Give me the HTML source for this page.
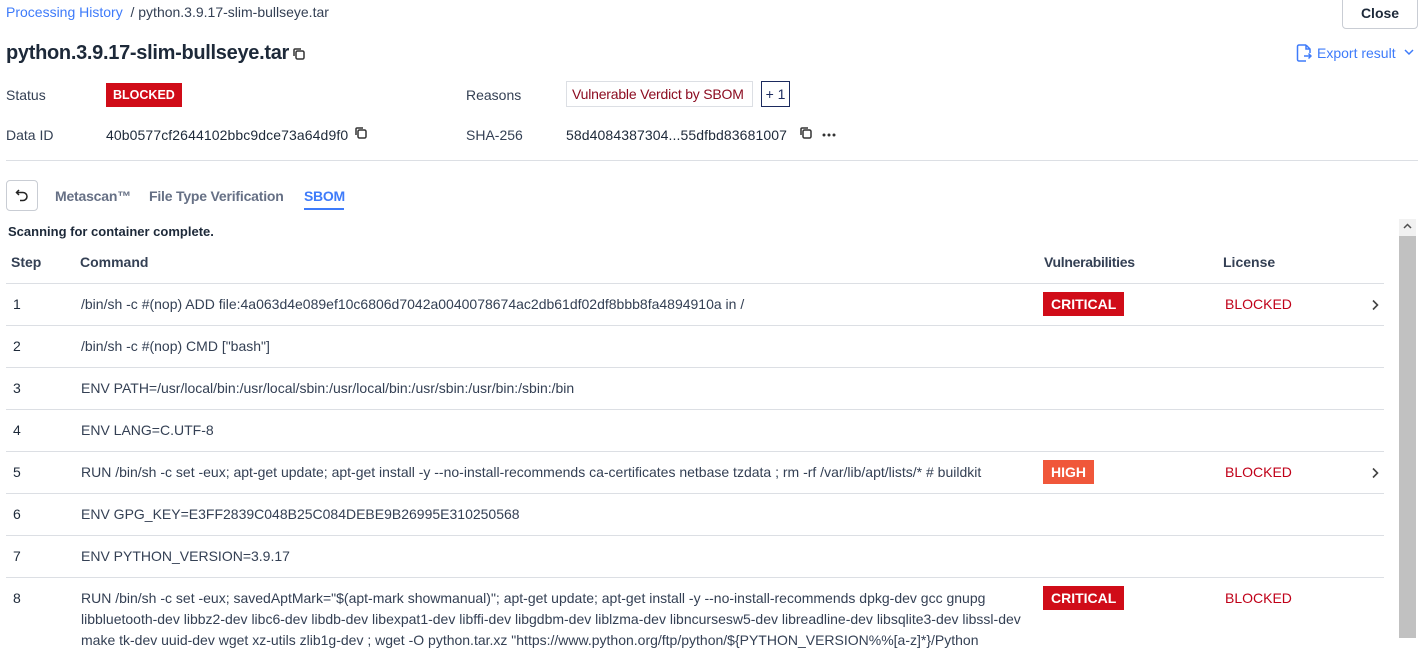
<!DOCTYPE html>
<html><head><meta charset="utf-8"><style>
*{box-sizing:border-box;margin:0;padding:0}
body{width:1428px;height:638px;overflow:hidden;background:#fff;font-family:"Liberation Sans",sans-serif;color:#1d2939;position:relative;font-size:14px}
.a{position:absolute;white-space:nowrap}
.lbl{color:#344054;font-size:14px}
.tag{background:#d00c18;color:#fff;font-weight:bold;font-size:13px;padding:0 7px;height:24px;line-height:24px}
.hi{background:#f0573a}
.row{position:absolute;left:6px;width:1378px;height:42px;border-top:1px solid #dcdfe4}
.row .n{position:absolute;left:7px;top:12px}
.row .c{position:absolute;left:75px;top:10px;font-size:14px;letter-spacing:0;color:#344054;white-space:nowrap;line-height:21px}
.row .v{position:absolute;left:1037px;top:8px;padding:0 8px;font-size:14px}
.row .l{position:absolute;left:1219px;top:12px;color:#c00018}
.row .ch{position:absolute;left:1365px;top:15px}
</style></head><body>
<div class="a" style="left:6px;top:4px;color:#3e7bfa;font-size:14px">Processing History <span style="color:#344054">&nbsp;/ python.3.9.17-slim-bullseye.tar</span></div>
<div class="a" style="left:1342px;top:-4px;width:76px;height:33px;border:1px solid #c9cdd4;border-radius:4px;text-align:center;line-height:32px;font-weight:bold;font-size:14px">Close</div>
<div class="a" style="left:6px;top:42px;font-size:20px;font-weight:bold;letter-spacing:-0.3px">python.3.9.17-slim-bullseye.tar</div>
<svg class="a" style="left:292px;top:47px" width="14" height="14" viewBox="0 0 14 14" fill="none" stroke="#333" stroke-width="1.5"><rect x="4" y="4" width="8" height="8" rx="1.5"/><path d="M2 9V3a1 1 0 0 1 1-1h6"/></svg>
<svg class="a" style="left:1296px;top:44px" width="16" height="18" viewBox="0 0 16 18" fill="none" stroke="#3e7bfa" stroke-width="1.5"><path d="M10 1H3a1.5 1.5 0 0 0-1.5 1.5v13A1.5 1.5 0 0 0 3 17h7M10 1l4 4v4M10 1v4h4M8 12h7M12.5 9.5 15 12l-2.5 2.5"/></svg>
<div class="a" style="left:1317px;top:45px;color:#3e7bfa;font-size:14px">Export result</div>
<svg class="a" style="left:1404px;top:49px" width="10" height="7" viewBox="0 0 10 7" fill="none" stroke="#3e7bfa" stroke-width="1.5"><path d="M1 1l4 4 4-4"/></svg>
<div class="a lbl" style="left:6px;top:87px">Status</div>
<div class="a tag" style="left:106px;top:83px;height:24px;font-size:12.5px;padding:0 7px">BLOCKED</div>
<div class="a lbl" style="left:466px;top:87px">Reasons</div>
<div class="a" style="left:566px;top:81px;height:26px;border:1px solid #dcdfe4;padding:0 8px 0 5px;line-height:25px;color:#8b0a1f;letter-spacing:-0.2px">Vulnerable Verdict by SBOM</div>
<div class="a" style="left:761px;top:81px;height:26px;width:29px;border:1px solid #1b2a5e;line-height:25px;text-align:center;color:#1b2a5e">+ 1</div>
<div class="a lbl" style="left:6px;top:127px">Data ID</div>
<div class="a" style="left:106px;top:127px;color:#1d2939;letter-spacing:0.1px">40b0577cf2644102bbc9dce73a64d9f0</div>
<svg class="a" style="left:354px;top:126px" width="14" height="14" viewBox="0 0 14 14" fill="none" stroke="#333" stroke-width="1.5"><rect x="4" y="4" width="8" height="8" rx="1.5"/><path d="M2 9V3a1 1 0 0 1 1-1h6"/></svg>
<div class="a lbl" style="left:466px;top:127px">SHA-256</div>
<div class="a" style="left:566px;top:127px;letter-spacing:0.1px">58d4084387304...55dfbd83681007</div>
<svg class="a" style="left:799px;top:126px" width="14" height="14" viewBox="0 0 14 14" fill="none" stroke="#333" stroke-width="1.5"><rect x="4" y="4" width="8" height="8" rx="1.5"/><path d="M2 9V3a1 1 0 0 1 1-1h6"/></svg>
<svg class="a" style="left:822px;top:133px" width="14" height="4" viewBox="0 0 14 4" fill="#333"><circle cx="2" cy="2" r="1.5"/><circle cx="7" cy="2" r="1.5"/><circle cx="12" cy="2" r="1.5"/></svg>
<div class="a" style="left:6px;top:160px;width:1412px;border-top:1px solid #dcdfe4"></div>
<div class="a" style="left:6px;top:180px;width:32px;height:31px;border:1px solid #c9cdd4;border-radius:4px"></div>
<svg class="a" style="left:15px;top:188px" width="14" height="14" viewBox="0 0 14 14" fill="none" stroke="#222" stroke-width="1.5"><path d="M4 2 1.5 4.5 4 7M1.5 4.5H8a4 4 0 0 1 0 8H5"/></svg>
<div class="a" style="left:55px;top:188px;color:#667085;font-weight:bold;font-size:14px;letter-spacing:-0.2px">Metascan™</div>
<div class="a" style="left:149px;top:188px;color:#667085;font-weight:bold;font-size:14px;letter-spacing:-0.2px">File Type Verification</div>
<div class="a" style="left:304px;top:188px;color:#3e7bfa;font-weight:bold;font-size:14px;letter-spacing:-0.3px">SBOM</div>
<div class="a" style="left:304px;top:208px;width:40px;border-top:2px solid #3e7bfa"></div>
<div class="a" style="left:8px;top:224px;font-weight:bold;font-size:13px;color:#1d2939">Scanning for container complete.</div>
<div class="a" style="left:11px;top:254px;font-weight:bold;color:#344054">Step</div>
<div class="a" style="left:80px;top:254px;font-weight:bold;color:#344054">Command</div>
<div class="a" style="left:1044px;top:254px;font-weight:bold;color:#344054;letter-spacing:-0.3px">Vulnerabilities</div>
<div class="a" style="left:1223px;top:254px;font-weight:bold;color:#344054">License</div>
<div class="row" style="top:283px"><span class="n">1</span><span class="c">/bin/sh -c #(nop) ADD file:4a063d4e089ef10c6806d7042a0040078674ac2db61df02df8bbb8fa4894910a in /</span><span class="v tag">CRITICAL</span><span class="l">BLOCKED</span><svg class="ch" width="8" height="12" viewBox="0 0 8 12" fill="none" stroke="#444" stroke-width="1.6"><path d="M2 1.5 6.5 6 2 10.5"/></svg></div>
<div class="row" style="top:325px"><span class="n">2</span><span class="c">/bin/sh -c #(nop) CMD ["bash"]</span></div>
<div class="row" style="top:367px"><span class="n">3</span><span class="c">ENV PATH=/usr/local/bin:/usr/local/sbin:/usr/local/bin:/usr/sbin:/usr/bin:/sbin:/bin</span></div>
<div class="row" style="top:409px"><span class="n">4</span><span class="c">ENV LANG=C.UTF-8</span></div>
<div class="row" style="top:451px"><span class="n">5</span><span class="c">RUN /bin/sh -c set -eux; apt-get update; apt-get install -y --no-install-recommends ca-certificates netbase tzdata ; rm -rf /var/lib/apt/lists/* # buildkit</span><span class="v tag hi">HIGH</span><span class="l">BLOCKED</span><svg class="ch" width="8" height="12" viewBox="0 0 8 12" fill="none" stroke="#444" stroke-width="1.6"><path d="M2 1.5 6.5 6 2 10.5"/></svg></div>
<div class="row" style="top:493px"><span class="n">6</span><span class="c">ENV GPG_KEY=E3FF2839C048B25C084DEBE9B26995E310250568</span></div>
<div class="row" style="top:535px"><span class="n">7</span><span class="c">ENV PYTHON_VERSION=3.9.17</span></div>
<div class="row" style="top:577px;height:80px"><span class="n">8</span><span class="c">RUN /bin/sh -c set -eux; savedAptMark="$(apt-mark showmanual)"; apt-get update; apt-get install -y --no-install-recommends dpkg-dev gcc gnupg<br>libbluetooth-dev libbz2-dev libc6-dev libdb-dev libexpat1-dev libffi-dev libgdbm-dev liblzma-dev libncursesw5-dev libreadline-dev libsqlite3-dev libssl-dev<br>make tk-dev uuid-dev wget xz-utils zlib1g-dev ; wget -O python.tar.xz "https://www.python.org/ftp/python/${PYTHON_VERSION%%[a-z]*}/Python</span><span class="v tag">CRITICAL</span><span class="l">BLOCKED</span></div>
<div class="a" style="left:1399px;top:219px;width:17px;height:419px;background:#f1f1f1"></div>
<div class="a" style="left:1399px;top:236px;width:17px;height:402px;background:#c1c1c1"></div>
<svg class="a" style="left:1403px;top:223px" width="9" height="6" viewBox="0 0 9 6" fill="none" stroke="#505050" stroke-width="1.5"><path d="M1 5l3.5-3.5L8 5"/></svg>
</body></html>
